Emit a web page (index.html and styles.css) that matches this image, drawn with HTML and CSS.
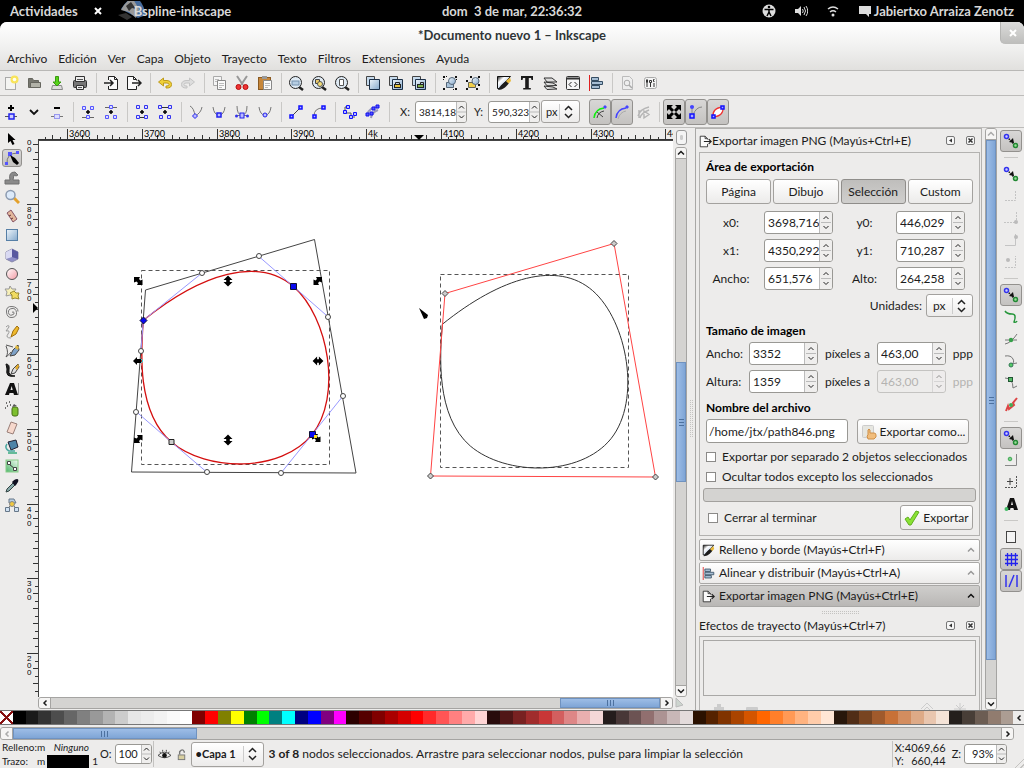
FILE: index.html
```html
<!DOCTYPE html>
<html lang="es">
<head>
<meta charset="utf-8">
<title>*Documento nuevo 1 - Inkscape</title>
<link rel="stylesheet" href="styles.css">
</head>
<body>
<svg class="defs" aria-hidden="true">
  <defs>
    <linearGradient id="blueg" x1="0" y1="0" x2="1" y2="1"><stop offset="0" stop-color="#eef5fb"/><stop offset="1" stop-color="#85a9cc"/></linearGradient>
    <linearGradient id="inkg" x1="0" y1="0" x2="1" y2="1"><stop offset="0" stop-color="#111"/><stop offset=".3" stop-color="#fff"/><stop offset="1" stop-color="#7ba0cf"/></linearGradient>
    <linearGradient id="pinkg" x1="0" y1="0" x2="1" y2="1"><stop offset="0" stop-color="#fff"/><stop offset="1" stop-color="#f49aa4"/></linearGradient>
    <linearGradient id="greeng" x1="0" y1="1" x2="1" y2="0"><stop offset="0" stop-color="#4fb56a"/><stop offset="1" stop-color="#eefaf0"/></linearGradient>
  </defs>
  <symbol id="new" viewBox="0 0 16 16"><rect x="2.500" y="2.500" width="10" height="12" fill="#f4f4f2" stroke="#aaa"/><circle cx="11.500" cy="4.500" r="4" fill="#f8e45c"/><circle cx="11.500" cy="4.500" r="1.800" fill="#fffef0"/></symbol>
  <symbol id="open" viewBox="0 0 16 16"><path d="M2.500 12.500v-9h4l1 2h5v7z" fill="#77776f" stroke="#66665f"/><path d="M4.500 12.500v-5h10v5z" fill="#b2b2a8" stroke="#66665f"/></symbol>
  <symbol id="save" viewBox="0 0 16 16"><path d="M3.500 10.500h9l1 4h-11z" fill="#ddd" stroke="#888"/><path d="M6.500 1.500h3V7H12l-4 4-4-4h2.500z" fill="#57d21a" stroke="#399a10"/></symbol>
  <symbol id="print" viewBox="0 0 16 16"><rect x="1.500" y="5.500" width="13" height="7" rx="1" fill="#777" stroke="#333"/><path d="M3.500 1.500h9v5h-9zM4.500 10.500h7v4h-7z" fill="#eee" stroke="#333"/><path d="M5 4.500h6M6 12.500h4" stroke="#555"/></symbol>
  <symbol id="import" viewBox="0 0 16 16"><path d="M5.500 5V1.500h6l3 3v10h-9V11" fill="#fafafa" stroke="#222"/><path d="M11.500 1.500v3h3" fill="none" stroke="#222"/><path d="M1 8h8M7 5l3 3-3 3" fill="none" stroke="#222" stroke-width="1.500"/></symbol>
  <symbol id="export" viewBox="0 0 16 16"><path d="M10.500 5.500v-1l-3-3h-6v13h9V11" fill="#fafafa" stroke="#222"/><path d="M7.500 1.500v3h3" fill="none" stroke="#222"/><path d="M6 8h8M12 5l3 3-3 3" fill="none" stroke="#222" stroke-width="1.500"/></symbol>
  <symbol id="undo" viewBox="0 0 16 16"><path d="M1.500 7l5-4v2.500h3.500q4.500.5 4.500 4T10 13H9v-2h1q2-.2 2-1.500T10 8H6.500v3z" fill="#f0d038" stroke="#bd9a1c"/></symbol>
  <symbol id="redo" viewBox="0 0 16 16"><path d="M14.500 7l-5-4v2.500H6Q1.500 6 1.500 9.500T6 13h1v-2H6q-2-.2-2-1.500T6 8h3.500v3z" fill="#ddd" stroke="#c4c4c4"/></symbol>
  <symbol id="copy" viewBox="0 0 16 16"><path d="M2.500 1.500h8v9h-8z" fill="#f5f5f5" stroke="#aaa"/><path d="M4 4.500h4M4 6.500h2" stroke="#bbb"/><path d="M6.500 5.500h8v9h-8z" fill="#fafafa" stroke="#888"/><path d="M8 8.500h5M8 10.500h5M8 12.500h3" stroke="#bbb"/></symbol>
  <symbol id="cut" viewBox="0 0 16 16"><path d="M3 1l6 9M13 1L7 10" stroke="#999" stroke-width="2"/><circle cx="4.500" cy="12" r="2.500" fill="#e33" stroke="#b80d0d"/><circle cx="11.500" cy="12" r="2.500" fill="#e33" stroke="#b80d0d"/></symbol>
  <symbol id="paste" viewBox="0 0 16 16"><rect x="1.500" y="2.500" width="12" height="12" fill="#c6863a" stroke="#8a5a22"/><rect x="5" y="1" width="5" height="3" fill="#999"/><path d="M6.500 5.500h8v9h-8z" fill="#fafafa" stroke="#888"/><path d="M8 8.500h5M8 10.500h5M8 12.500h3" stroke="#bbb"/></symbol>
  <symbol id="zoomsel" viewBox="0 0 16 16"><path d="M11 12l4 3" stroke="#222" stroke-width="2.500"/><circle cx="7.500" cy="7.500" r="6" fill="#dfeaf4" stroke="#222"/><rect x="4" y="6" width="7" height="4" fill="#b5cde3" stroke="#7692ae"/></symbol>
  <symbol id="zoomdraw" viewBox="0 0 16 16"><path d="M11 12l4 3" stroke="#222" stroke-width="2.500"/><circle cx="7.500" cy="7.500" r="6" fill="#dfeaf4" stroke="#222"/><path d="M4.500 4.500h4v4h-4z" fill="#e7c86a" stroke="#444"/><circle cx="9" cy="9" r="2.500" fill="#f3dd77" stroke="#555"/></symbol>
  <symbol id="zoompage" viewBox="0 0 16 16"><path d="M11 12l4 3" stroke="#222" stroke-width="2.500"/><circle cx="7.500" cy="7.500" r="6" fill="#dfeaf4" stroke="#222"/><path d="M5.500 4.500h4v6h-4z" fill="#fff" stroke="#555"/></symbol>
  <symbol id="dup" viewBox="0 0 16 16"><path d="M1.500 1.500h8v9h-8z" fill="#c6daec" stroke="#444"/><path d="M4.500 4.500h10v10h-10z" fill="url(#blueg)" stroke="#1b2f47"/></symbol>
  <symbol id="clone" viewBox="0 0 16 16"><path d="M1.500 1.500h8v9h-8z" fill="#c6daec" stroke="#444"/><path d="M4.500 4.500h10v10h-10z" fill="url(#blueg)" stroke="#1b2f47"/><rect x="6.500" y="9.500" width="6" height="3" fill="#e7c33a" stroke="#222"/><path d="M7.500 9V7.500h4V9" fill="none" stroke="#222"/></symbol>
  <symbol id="unclone" viewBox="0 0 16 16"><path d="M1.500 1.500h8v9h-8z" fill="#c6daec" stroke="#444"/><path d="M4.500 4.500h10v10h-10z" fill="url(#blueg)" stroke="#1b2f47"/><rect x="6.500" y="9.500" width="6" height="3" fill="#7fb34c" stroke="#222"/><path d="M9.500 9V7.500h3V9" fill="none" stroke="#222"/></symbol>
  <symbol id="group" viewBox="0 0 16 16"><path d="M4.500 7.500h7v5h-7z" fill="#a9c3da" stroke="#567"/><circle cx="10" cy="6" r="3.500" fill="url(#blueg)" stroke="#567"/><path d="M1 1h2v2H1zM13 1h2v2h-2zM1 13h2v2H1zM13 13h2v2h-2zM4 1h1v1H4zM1 4h1v1H1zM14 4h1v1h-1zM11 14h1v1h-1z" fill="#111"/></symbol>
  <symbol id="ungroup" viewBox="0 0 16 16"><path d="M3.500 7.500h7v5h-7z" fill="#f0cf4a" stroke="#665"/><circle cx="10.500" cy="6" r="3.500" fill="url(#blueg)" stroke="#567"/><path d="M1 5h2v2H1zM13 1h2v2h-2zM1 13h2v2H1zM11 13h2v2h-2zM5 1h2v2H5zM13 9h2v2h-2z" fill="#111"/></symbol>
  <symbol id="fill" viewBox="0 0 16 16"><path d="M1.500 1.500h13l-11 12h-2z" fill="url(#inkg)" stroke="#111"/><path d="M2 15c1-3 4-6 8-9l3 2c-3 4-6 7-11 7z" fill="#1c1c1c"/><path d="M10 6l4-3.500 1 3.500-2.500 2.500z" fill="#e7b93c"/></symbol>
  <symbol id="bigt" viewBox="0 0 16 16"><path d="M2 1h12v4h-1.500L12 3H9.800v10h2v1.500H4.200V13h2V3H4l-.5 2H2z" fill="#1b1b1b"/></symbol>
  <symbol id="layers" viewBox="0 0 16 16"><path d="M2 11l9 1 4 2-10 .5zM2 7l9 1 4 2.500-10 .3zM2 3h8l5 4H5z" fill="#ddd" stroke="#333"/></symbol>
  <symbol id="xml" viewBox="0 0 16 16"><rect x="1.500" y="1.500" width="13" height="13" rx="1" fill="#f5f5f5" stroke="#333"/><path d="M2 3.500h12" stroke="#333" stroke-width="2"/><path d="M6.500 7L4 9.500 6.500 12M9.500 7L12 9.500 9.500 12" fill="none" stroke="#222"/></symbol>
  <symbol id="align" viewBox="0 0 16 16"><path d="M1.500 0v16" stroke="#e02020"/><path d="M3.500 2.500h7v3h-7zM3.500 6.500h11v3h-11zM3.500 10.500h8v3h-8z" fill="#a6bed4" stroke="#354d63"/></symbol>
  <symbol id="docfind" viewBox="0 0 16 16"><path d="M3.500 1.500h7l3 3v10h-10z" fill="#eee" stroke="#bbb"/><circle cx="8" cy="8" r="2.800" fill="none" stroke="#aaa"/><path d="M10 10l3 3" stroke="#aaa" stroke-width="1.500"/></symbol>
  <symbol id="prefs" viewBox="0 0 16 16"><rect x="2.500" y="2.500" width="12" height="11" rx="2" fill="#f4f4f4" stroke="#aaa"/><path d="M4.500 4.500v3h1v-3M7.500 5.500h2v2h-2zM12.500 4.500h-1v2h1M5 8v4M8.500 8v4M12 8v4" fill="none" stroke="#333"/></symbol>

  <symbol id="nadd" viewBox="0 0 16 16"><path d="M2 12.500h12" stroke="#555"/><path d="M8 1v6M5 4h6" stroke="#000" stroke-width="2"/><rect x="6" y="10" width="5" height="5" fill="#ccf" stroke="#22e" stroke-width="1.500"/></symbol>
  <symbol id="ndel" viewBox="0 0 16 16"><path d="M2 12.500h12" stroke="#777"/><path d="M5 4h6" stroke="#000" stroke-width="2"/><rect x="5.500" y="10.500" width="5" height="4" fill="#ddf" stroke="#99e"/></symbol>
  <symbol id="chev" viewBox="0 0 16 16"><path d="M4 6l4 4 4-4" fill="none" stroke="#111" stroke-width="1.800"/></symbol>
  <symbol id="njoin" viewBox="0 0 16 16"><path d="M2.500 2.500h3v3h-3zM10.500 2.500h3v3h-3zM6.500 11.500h3v3h-3z" fill="#ddf" stroke="#55f"/><path d="M2 13.500h4M10 13.500h4" stroke="#666"/><path d="M8 6v4M6 8h4" stroke="#000" stroke-width="1.500"/></symbol>
  <symbol id="nbreak" viewBox="0 0 16 16"><path d="M6.500 1.500h3v3h-3zM2.500 11.500h3v3h-3zM10.500 11.500h3v3h-3z" fill="#ddf" stroke="#55f"/><path d="M2 3.500h4M10 3.500h4" stroke="#666"/><path d="M8 6v4M6 8h4" stroke="#000" stroke-width="1.500"/></symbol>
  <symbol id="sjoin" viewBox="0 0 16 16"><path d="M2.500 1.500h3v3h-3zM10.500 1.500h3v3h-3zM2.500 11.500h3v3h-3zM10.500 11.500h3v3h-3z" fill="#ddf" stroke="#33e"/><path d="M6 13.500h4" stroke="#333"/><path d="M8 6v4M6 8h4" stroke="#000" stroke-width="1.500"/></symbol>
  <symbol id="sdel" viewBox="0 0 16 16"><path d="M1.500 1.500h3v3h-3zM11.500 1.500h3v3h-3zM2.500 11.500h3v3h-3zM10.500 11.500h3v3h-3z" fill="#ddf" stroke="#33e"/><path d="M5 3.500h6" stroke="#333"/><path d="M8 6v4M6 8h4" stroke="#000" stroke-width="1.500"/></symbol>
  <symbol id="ncusp" viewBox="0 0 16 16"><path d="M2 2q4 2 5 10Q13 9 14 3" fill="none" stroke="#777"/><path d="M7 9.500l2.500 2.500L7 14.500 4.500 12z" fill="#bbf" stroke="#22e"/></symbol>
  <symbol id="nsmooth" viewBox="0 0 16 16"><path d="M2 3q1 8 6 8t6-8" fill="none" stroke="#777"/><rect x="6" y="9" width="4" height="4" fill="#bbf" stroke="#22e" stroke-width="1.500"/></symbol>
  <symbol id="nsym" viewBox="0 0 16 16"><path d="M3 2q0 9 5 9t5-9M2 11.500h12" fill="none" stroke="#777"/><rect x="6" y="9" width="4" height="5" fill="#bbf" stroke="#22e"/><circle cx="2.500" cy="12" r="1.500" fill="#33e"/><circle cx="13.500" cy="12" r="1.500" fill="#33e"/></symbol>
  <symbol id="nauto" viewBox="0 0 16 16"><path d="M2 3q1 8 6 8t6-8" fill="none" stroke="#777"/><circle cx="8" cy="11" r="2" fill="#bbf" stroke="#22e"/></symbol>
  <symbol id="sline" viewBox="0 0 16 16"><path d="M4 12l8-8" stroke="#444"/><path d="M2 11h3v3H2zM11 2h3v3h-3z" fill="#bbf" stroke="#11f" stroke-width="1.500"/></symbol>
  <symbol id="scurve" viewBox="0 0 16 16"><path d="M3 12q0-8 9-8" fill="none" stroke="#777"/><path d="M2 11h3v3H2zM11 2h3v3h-3z" fill="#bbf" stroke="#11f" stroke-width="1.500"/></symbol>
  <symbol id="topath" viewBox="0 0 16 16"><path d="M6 3H3v6h6v4h4" fill="none" stroke="#555"/><path d="M1.500 6.500h3v3h-3zM4.500 1.500h3v3h-3zM7.500 11.500h3v3h-3zM11.500 8.500h3v3h-3z" fill="#bbf" stroke="#11f"/></symbol>
  <symbol id="stpath" viewBox="0 0 16 16"><path d="M2 11q2-8 12-8M6 14q1-6 7-8" fill="none" stroke="#99b" stroke-width="2"/><path d="M1 9h3v3H1zM7 3h3v3H7zM5 8h3v3H5zM11 1h3v3h-3z" fill="#55f" stroke="#11e"/></symbol>
  <symbol id="clip" viewBox="0 0 16 16"><path d="M2 14Q3 5 12 4" fill="none" stroke="#1e1" stroke-width="1.500"/><path d="M13 1l2 2-2 2-2-2z" fill="#44f"/><path d="M5 14q1-6 7-7M5 8l6 5" stroke="#444" fill="none"/></symbol>
  <symbol id="mask" viewBox="0 0 16 16"><path d="M2 14Q3 5 12 4" fill="none" stroke="#44f" stroke-width="1.500"/><path d="M4 15q2-7 8-8" stroke="#aaa" fill="none"/><path d="M13 1l2 2-2 2-2-2z" fill="#44f"/></symbol>
  <symbol id="lpe" viewBox="0 0 16 16"><path d="M2 12q2-7 11-9M4 14q1-5 9-8M3 6v8M8 7v7l5-3.500z" fill="none" stroke="#b5b5b5" stroke-width="1.400"/></symbol>
  <symbol id="handles" viewBox="0 0 16 16"><path d="M1 1h6L1 7zM15 1v6L9 1zM1 15V9l6 6zM15 15H9l6-6z" fill="#000"/><path d="M3 3l4 4M13 3L9 7M3 13l4-4M13 13L9 9" stroke="#000" stroke-width="3"/></symbol>
  <symbol id="hshow" viewBox="0 0 16 16"><path d="M4 12V4M5 11q3-8 9-8" fill="none" stroke="#888"/><rect x="2" y="10" width="4" height="4" fill="#aaf" stroke="#11f" stroke-width="1.500"/><circle cx="4" cy="3" r="2" fill="#44f"/></symbol>
  <symbol id="outline" viewBox="0 0 16 16"><path d="M3 13Q2 4 13 3Q14 12 3 13z" fill="#fff" stroke="#e33" stroke-width="1.300"/><path d="M2 11h3v3H2zM11 2h3v3h-3z" fill="#aaf" stroke="#11f" stroke-width="1.500"/></symbol>

  <symbol id="tsel" viewBox="0 0 16 16"><path d="M4 2v10l2.500-2 2 4 2-1-2-4h3z" fill="#000"/></symbol>
  <symbol id="tnode" viewBox="0 0 16 16"><path d="M3 14Q2 3 14 3" fill="none" stroke="#777"/><path d="M4 2h4v4H4zM1 12h3v3H1zM12 1h3v3h-3z" fill="#55f"/><path d="M6 5l5 3 4 5-2 2-4-3z" fill="#000"/></symbol>
  <symbol id="ttweak" viewBox="0 0 16 16"><path d="M1 14v-4h5q-2-8 5-8l3 3-2 1-2-1-1 5h6v4z" fill="#8a8a8a" stroke="#707070"/></symbol>
  <symbol id="tzoom" viewBox="0 0 16 16"><path d="M10 9l5 5" stroke="#e4a12c" stroke-width="3"/><circle cx="6.500" cy="6" r="4.500" fill="#dceafa" stroke="#8c9bb0" stroke-width="1.500"/></symbol>
  <symbol id="tmeasure" viewBox="0 0 16 16"><path d="M7 2l6 9-4 3-6-9z" fill="#e2b79c" stroke="#856"/><path d="M5 8l2-1M7 11l2-1" stroke="#633"/></symbol>
  <symbol id="trect" viewBox="0 0 16 16"><rect x="2.500" y="2.500" width="11" height="11" fill="url(#blueg)" stroke="#567fa6"/></symbol>
  <symbol id="tbox" viewBox="0 0 16 16"><path d="M8 2l6 3v7l-6 3-6-3V5z" fill="#8f8fc8" stroke="#88a"/><path d="M8 2v8l-6 2V5z" fill="#d9d9f2"/><path d="M8 10l6 2V5L8 2z" fill="#5959a0"/></symbol>
  <symbol id="tcirc" viewBox="0 0 16 16"><circle cx="8" cy="8" r="5.500" fill="url(#pinkg)" stroke="#555"/></symbol>
  <symbol id="tstar" viewBox="0 0 16 16"><path d="M6 1l2 3 4 0-2 3 1 4-5-1-4 1 1-4-2-3 4 0z" fill="#f7f0b8" stroke="#999"/><path d="M10 6l2 2 3 0-1 3 1 3-4-1-3 1V10L6 8z" fill="#f1dc62" stroke="#998a30"/></symbol>
  <symbol id="tspiral" viewBox="0 0 16 16"><path d="M8 8.500q1-1.500 2 0t-2 2.500-3.500-2.500T8 4.500t4.500 4T8 13.500 2.500 8 8 2.500t6 5" fill="none" stroke="#777"/></symbol>
  <symbol id="tpencil" viewBox="0 0 16 16"><path d="M2 3q3-3 3 0L2 7q5-1 2 3t3 4" fill="none" stroke="#999"/><path d="M7 13l2-6 4-5 2 2-3 6z" fill="#efb92c" stroke="#a07010"/></symbol>
  <symbol id="tpen" viewBox="0 0 16 16"><path d="M2 2l7 2M2 3q3 7 0 11 3-2 5-5" fill="none" stroke="#555"/><path d="M6 13l3-6 5-5 1 5-4 5z" fill="#7ea2c8" stroke="#444"/><path d="M12 2l3 2-1 3-3-2z" fill="#e0b840"/></symbol>
  <symbol id="tcallig" viewBox="0 0 16 16"><path d="M2 2q4 0 3 6t6 6Q1 16 3 7z" fill="#222" stroke="#111"/><path d="M7 12l2-5 5-5 1 3-4 6z" fill="#ddd" stroke="#444"/><path d="M11 6l3-4 1 2-2 4z" fill="#e3aa28"/></symbol>
  <symbol id="ttext" viewBox="0 0 16 16"><path d="M1 14L6 2h4l4 12h-4l-.6-2H5.500L5 14zM6.500 9h2.200L7.700 5z" fill="#111"/><path d="M14.500 2v12" stroke="#999"/></symbol>
  <symbol id="tspray" viewBox="0 0 16 16"><path d="M2 2h1M5 1h1M3 5h1M6 4h1M1 7h1" stroke="#444" stroke-width="1.500"/><rect x="8" y="6" width="6" height="9" rx="2" fill="#7dbf2e" stroke="#476f16"/><path d="M8 6l2-3 3 2z" fill="#555"/></symbol>
  <symbol id="teraser" viewBox="0 0 16 16"><path d="M7 2l6 2-4 10-6-2z" fill="#f6d8cc" stroke="#9a7f78"/></symbol>
  <symbol id="tbucket" viewBox="0 0 16 16"><path d="M4 3l8-2 2 7-7 3z" fill="#4d84a8" stroke="#223"/><path d="M3 5q-3 4 2 7h6" fill="none" stroke="#4aa7a0" stroke-width="1.500"/><path d="M4 14h9" stroke="#6b9" stroke-width="2"/></symbol>
  <symbol id="tgrad" viewBox="0 0 16 16"><rect x="2" y="2" width="12" height="12" fill="url(#greeng)" stroke="#8c8"/><path d="M5 6l6 5" stroke="#333"/><path d="M3.500 3.500h3v3h-3zM9.500 9.500h3v3h-3z" fill="#fff" stroke="#444"/></symbol>
  <symbol id="tdrop" viewBox="0 0 16 16"><path d="M2 14l1-3 6-6 2 2-6 6z" fill="#8aa" stroke="#344"/><path d="M8 4l3 4 1-1 2-3q1-3-1-3t-4 2z" fill="#112"/></symbol>
  <symbol id="tconn" viewBox="0 0 16 16"><path d="M8 7l-4 4M8 7l4 4" stroke="#777"/><path d="M1.500 10.500h4v4h-4zM10.500 10.500h4v4h-4z" fill="#cfe0f2" stroke="#678"/><path d="M5 2h5l2 4H5z" fill="#b9d0e6" stroke="#678"/><circle cx="8" cy="7" r="2.500" fill="#f0c840" stroke="#888"/></symbol>

  <symbol id="snap" viewBox="0 0 16 16"><path d="M4 4l8 8" stroke="#111" stroke-width="1.500" stroke-dasharray="1.500 1"/><path d="M6 9l4-4 1 5z" fill="#111"/><circle cx="3.500" cy="3.500" r="2" fill="#ccf" stroke="#33e" stroke-width="1.500"/><circle cx="12.500" cy="12.500" r="2" fill="#9d9" stroke="#283" stroke-width="1.500"/></symbol>
  <symbol id="sn1" viewBox="0 0 16 16"><path d="M2 12.500h10.500V2" fill="none" stroke="#c4c4c4" stroke-dasharray="2 1"/></symbol>
  <symbol id="sn2" viewBox="0 0 16 16"><path d="M1 12.500h12.500V2" fill="none" stroke="#c4c4c4" stroke-dasharray="2 1"/><circle cx="13" cy="12" r="2" fill="#bbb"/></symbol>
  <symbol id="sn3" viewBox="0 0 16 16"><path d="M2 13.500h10.500V2" fill="none" stroke="#c4c4c4"/><circle cx="13" cy="5" r="2" fill="#bbb"/></symbol>
  <symbol id="sn4" viewBox="0 0 16 16"><path d="M2 13.500h10.500V2" fill="none" stroke="#c4c4c4" stroke-dasharray="2 1"/><circle cx="5" cy="6" r="2" fill="#bbb"/></symbol>
  <symbol id="sc1" viewBox="0 0 16 16"><path d="M2 2q2 3 7 3t2 8q2 1 3-1" fill="none" stroke="#25963a" stroke-width="1.500"/></symbol>
  <symbol id="sc2" viewBox="0 0 16 16"><path d="M2 13Q8 12 14 3M2 9h12" fill="none" stroke="#777"/><circle cx="8" cy="9" r="2.200" fill="#37a04a"/></symbol>
  <symbol id="sc3" viewBox="0 0 16 16"><path d="M2 3q6-1 8 3t-2 5l6-1" fill="none" stroke="#777"/><circle cx="8" cy="12" r="2" fill="#5c6" stroke="#375"/></symbol>
  <symbol id="sc4" viewBox="0 0 16 16"><path d="M2 3q8 0 8 10l4-2" fill="none" stroke="#777"/><rect x="5.500" y="2.500" width="4" height="4" fill="#5b6" stroke="#253"/></symbol>
  <symbol id="sc5" viewBox="0 0 16 16"><path d="M3 14l2-5 1 3 5-4-1-2 4-5" fill="none" stroke="#d44" stroke-width="2"/><circle cx="8" cy="8" r="2" fill="#4a5"/></symbol>
  <symbol id="so1" viewBox="0 0 16 16"><path d="M2 13.500h11.500V2" fill="none" stroke="#888"/><circle cx="7" cy="7" r="1.800" fill="#7c8" stroke="#4a5"/></symbol>
  <symbol id="so2" viewBox="0 0 16 16"><path d="M2 13.500h11.500V2" fill="none" stroke="#555" stroke-dasharray="2 1"/><path d="M4 7.500h6M7 4v7" stroke="#444"/></symbol>
  <symbol id="so3" viewBox="0 0 16 16"><path d="M3 14L7 2h4l4 12h-4l-.6-2H7.500L7 14zM8 9h2L9 5z" fill="#111"/><circle cx="3.500" cy="13" r="2" fill="#4b6"/></symbol>
  <symbol id="spage" viewBox="0 0 16 16"><rect x="3.500" y="2.500" width="9" height="11" fill="#f4f4f4" stroke="#444"/></symbol>
  <symbol id="sgrid" viewBox="0 0 16 16"><path d="M2 4.500h13M2 8.500h13M2 12.500h13M4.500 2v13M8.500 2v13M12.500 2v13" stroke="#22e" stroke-width="1.300"/></symbol>
  <symbol id="sguide" viewBox="0 0 16 16"><path d="M3 2v12M14 2v12M6 14l5-12" stroke="#33e" stroke-width="1.500"/></symbol>
  <symbol id="left" viewBox="0 0 8 8"><path d="M5.500 1.500L3 4l2.500 2.500" fill="none" stroke="currentColor" stroke-width="1.500"/></symbol>
  <symbol id="right" viewBox="0 0 8 8"><path d="M2.500 1.500L5 4 2.500 6.500" fill="none" stroke="currentColor" stroke-width="1.500"/></symbol>
  <symbol id="up" viewBox="0 0 8 8"><path d="M1 5.500L4 2.500l3 3" fill="none" stroke="currentColor" stroke-width="1.500"/></symbol>
  <symbol id="down" viewBox="0 0 8 8"><path d="M1 2.500l3 3 3-3" fill="none" stroke="currentColor" stroke-width="1.500"/></symbol>
  <symbol id="dockmin" viewBox="0 0 10 10"><rect x=".5" y=".5" width="8" height="8" rx="1.500" fill="#f6f6f6" stroke="#777"/><path d="M6 2.500v4L3 4.500z" fill="#333"/></symbol>
  <symbol id="dockx" viewBox="0 0 10 10"><rect x=".5" y=".5" width="8" height="8" rx="1.500" fill="#f6f6f6" stroke="#777"/><path d="M2.500 2.500l4 4M6.500 2.500l-4 4" stroke="#333" stroke-width="1.500"/></symbol>
</svg>

<header class="panel">
  <nav class="panel-left"><a href="#">Actividades</a>
    <svg class="ic8" viewBox="0 0 8 8"><path d="M1 1l6 6M7 1L1 7" stroke="#fff" stroke-width="2"/></svg>
    <a href="#" class="app"><svg viewBox="0 0 30 20"><path d="M3 8Q10-3 16-3q8 0 12 17l-8 3z" fill="#456b9c"/><path d="M3 9Q9-2 15-2l6 10-3 9-7-6z" fill="#999"/><path d="M8 5l5-4 5 7-4-1-3 3zM0 14l8-2 6 4-5 3z" fill="#333"/></svg><span>Bspline-inkscape</span></a></nav>
  <span class="clock">dom&nbsp; 3 de mar, 22:36:32</span>
  <div class="panel-right">
    <svg class="ic14" viewBox="0 0 14 14"><circle cx="7" cy="7" r="6.500" fill="#ddd"/><circle cx="7" cy="3" r="1.300" fill="#000"/><path d="M2.500 5.500h9M7 5v4M7 8l-2 4M7 8l2 4" stroke="#000" stroke-width="1.500" fill="none"/></svg>
    <svg class="ic14" viewBox="0 0 14 14"><path d="M1 5h3l3-3v10L4 9H1z" fill="#ddd"/><path d="M8.500 5q1.500 2 0 4M10 3q3 4 0 8M12 2q3.500 5 0 10" stroke="#ddd" fill="none"/></svg>
    <svg class="ic14" viewBox="0 0 14 14"><path d="M2 5q5-4 10 0M4 8q3-2.500 6 0" stroke="#ddd" stroke-width="1.500" fill="none"/><circle cx="7" cy="11" r="1.500" fill="#ddd"/></svg>
    <span class="user"><svg class="ic14" viewBox="0 0 14 14"><path d="M1 2h12v8h-2v3l-3-3H1z" fill="#ddd"/></svg>Jabiertxo Arraiza Zenotz</span>
  </div>
</header>

<div class="window">
  <div class="titlebar"><h1>*Documento nuevo 1 – Inkscape</h1><button class="close" aria-label="Cerrar"><svg class="ic8" viewBox="0 0 8 8"><path d="M1 1l6 6M7 1L1 7" stroke="#fff" stroke-width="2"/></svg></button></div>
  <nav class="menubar"><a href="#">Archivo</a><a href="#">Edición</a><a href="#">Ver</a><a href="#">Capa</a><a href="#">Objeto</a><a href="#">Trayecto</a><a href="#">Texto</a><a href="#">Filtros</a><a href="#">Extensiones</a><a href="#">Ayuda</a></nav>
  <div class="toolbar commands" data-icons="new open save print | import export | undo redo | copy cut paste | zoomsel zoomdraw zoompage | dup clone unclone | group ungroup | fill bigt layers xml align | docfind prefs"></div>
  <div class="toolbar controls">
    <div class="strip" data-icons="nadd chev ndel | njoin nbreak | sjoin sdel | ncusp nsmooth nsym nauto | sline scurve | topath stpath |"></div>
    <div class="coord"><label for="cx">X:</label><span class="spin small"><input id="cx" value="3814,18"></span></div>
    <div class="coord"><label for="cy">Y:</label><span class="spin small"><input id="cy" value="590,323"></span></div>
    <select class="unit" aria-label="Unidad"><option>px</option></select>
    <div class="strip toggles" data-icons="+clip +mask lpe | +handles +hshow +outline"></div>
  </div>

  <main class="work">
    <div class="toolbox" data-icons="tsel +tnode ttweak tzoom tmeasure trect tbox tcirc tstar tspiral tpencil tpen tcallig ttext tspray teraser tbucket tgrad tdrop tconn"></div>

    <section class="editor">
      <svg class="hruler" id="hruler"></svg>
      <button class="cms" aria-label="Ajuste de color"></button>
      <svg class="vruler" id="vruler"></svg>
      <svg class="canvas" id="canvas" role="img" aria-label="Lienzo">
        <defs>
          <path id="arr" d="M-6 0l5-5v3h2v-3l5 5-5 5v-3h-2v3z"/>
          <path id="arrd" d="M-6-6h7l-2 2 3 3 2-2v7h-1v1h-7l2-2-3-3-2 2v-7z"/>
          <path id="curve" d="M143.300 320.300C202 273 258.700 256.300 293.700 286.700C328.300 317 342.700 396.300 312 434.700C281 473 206.700 472 171.300 442C136.300 411.700 141 350.700 143.300 320.300z"/>
        </defs>
        <g transform="translate(-39 -141)" fill="none">
          <path d="M145.500 290L314.500 239.500 356 473 131.500 472z" stroke="#444"/>
          <rect x="141.500" y="270.500" width="188" height="194" stroke="#555" stroke-dasharray="4 3"/>
          <use href="#curve" stroke="#d40f0f" stroke-width="1.300"/>
          <path d="M143.300 320.300L202 273M258.700 256.300L293.700 286.700 328.300 317M342.700 396.300L312 434.700 281 473M206.700 472L171.300 442 136.300 411.700M141 350.700L143.300 320.300" stroke="#99f"/>
          <g fill="#fff" stroke="#444"><circle cx="202" cy="273" r="2.500"/><circle cx="259" cy="256" r="2.500"/><circle cx="328" cy="317" r="2.500"/><circle cx="343" cy="396" r="2.500"/><circle cx="281" cy="473" r="2.500"/><circle cx="207" cy="472" r="2.500"/><circle cx="136" cy="412" r="2.500"/><circle cx="141" cy="351" r="2.500"/></g>
          <g fill="#000">
            <path id="diag" d="M134 277h6l-1 2 1.500 1.500 2-1V285h-5.500l1-2-1.500-1.500-2.500 1z"/>
            <use href="#diag" transform="translate(456 0) scale(-1 1)"/>
            <use href="#diag" transform="translate(0 720) scale(1 -1)"/>
            <use href="#diag" transform="translate(178 157)"/>
            <use href="#arr" transform="translate(228 281) rotate(90) scale(.9)"/><use href="#arr" transform="translate(228 440) rotate(90) scale(.9)"/><use href="#arr" transform="translate(318 361) scale(.9)"/>
            <path d="M133 361l4-4v2h4v4h-4v2z"/>
          </g>
          <path d="M141 359l2 2-2 2" stroke="#3dd"/>
          <path d="M143.500 317l3.500 3.500-3.500 3.500-3.500-3.500zM290.500 283.500h6v6h-6zM309.500 431.500h6v6h-6z" fill="#0a0af0" stroke="#113"/>
          <path d="M314 435h3v3h-3z" fill="#fd2"/>
          <path d="M169 439.500h5v5h-5z" fill="#ccc" stroke="#222"/>
          <rect x="440.500" y="274.500" width="188" height="193" stroke="#555" stroke-dasharray="4 3"/>
          <use href="#curve" stroke="#333" transform="translate(299 4)"/>
          <path d="M445 293.500L614 243.500 655.500 477 430.500 476z" stroke="#f44"/>
          <path d="M445 290.500l3 3-3 3-3-3zM614 240.500l3 3-3 3-3-3zM655.500 474l3 3-3 3-3-3zM430.500 473l3 3-3 3-3-3z" fill="#ccc" stroke="#444"/>
          <path d="M419 308l9 7-1 3-3 1z" fill="#000"/>
        </g>
      </svg>
      <div class="scroll v" role="scrollbar" aria-controls="canvas" aria-valuenow="50"><button aria-label="Subir"><svg><use href="#up"/></svg></button><i class="s203"></i><b class="s117"></b><i class="s203"></i><button aria-label="Bajar"><svg><use href="#down"/></svg></button></div>
      <div class="scroll h" role="scrollbar" aria-controls="canvas" aria-valuenow="95"><button aria-label="Izquierda"><svg><use href="#left"/></svg></button><i class="s510"></i><b class="s98"></b><button aria-label="Derecha"><svg><use href="#right"/></svg></button></div>
      <svg class="managed" viewBox="0 0 12 12"><path d="M3 1l7 7-7 2z" fill="#cdd5cf" stroke="#bbb"/></svg>
    </section>

    <div class="splitter"><i></i></div>

    <aside class="dock" id="dock">
      <section class="dialog">
        <h2><svg class="ic13"><use href="#export"/></svg><span>Exportar imagen PNG (Mayús+Ctrl+E)</span><button aria-label="Iconizar"><svg><use href="#dockmin"/></svg></button><button aria-label="Cerrar panel"><svg><use href="#dockx"/></svg></button></h2>
        <form class="export">
          <h3>Área de exportación</h3>
          <div class="modes"><button type="button">Página</button><button type="button">Dibujo</button><button type="button" class="on">Selección</button><button type="button">Custom</button></div>
          <div class="area">
            <label for="x0">x0:</label><span class="spin"><input id="x0" value="3698,716"></span><label for="y0">y0:</label><span class="spin"><input id="y0" value="446,029"></span>
            <label for="x1">x1:</label><span class="spin"><input id="x1" value="4350,292"></span><label for="y1">y1:</label><span class="spin"><input id="y1" value="710,287"></span>
            <label for="aw">Ancho:</label><span class="spin"><input id="aw" value="651,576"></span><label for="ah">Alto:</label><span class="spin"><input id="ah" value="264,258"></span>
          </div>
          <div class="units"><label for="un">Unidades:</label><select id="un"><option>px</option></select></div>
          <h3>Tamaño de imagen</h3>
          <div class="size">
            <label for="iw">Ancho:</label><span class="spin"><input id="iw" value="3352"></span><label for="d1">píxeles a</label><span class="spin"><input id="d1" value="463,00"></span><span>ppp</span>
            <label for="ih">Altura:</label><span class="spin"><input id="ih" value="1359"></span><label for="d2">píxeles a</label><span class="spin off"><input id="d2" value="463,00" disabled></span><span class="off">ppp</span>
          </div>
          <h3>Nombre del archivo</h3>
          <div class="file"><input aria-label="Nombre del archivo" value="/home/jtx/path846.png"><button type="button"><svg class="ic16" viewBox="0 0 16 16"><rect x="1.500" y="1.500" width="11" height="12" rx="1" fill="#e6e6e0" stroke="#ccc"/><path d="M7 15q-2-4 0-4V6q1-2 2 0v3h4q2 0 2 2v2l-2 2z" fill="#f1bd7c" stroke="#cf9048"/></svg>Exportar como...</button></div>
          <label class="check"><input type="checkbox">Exportar por separado 2 objetos seleccionados</label>
          <label class="check"><input type="checkbox">Ocultar todos excepto los seleccionados</label>
          <div class="progress" role="progressbar" aria-label="Progreso"></div>
          <div class="finish"><label class="check"><input type="checkbox">Cerrar al terminar</label><button type="button"><svg class="ic16" viewBox="0 0 16 16"><path d="M1 9l3-2 2 3 6-9 3 1-8 13H5z" fill="#8ae234" stroke="#5fae20"/></svg>Exportar</button></div>
        </form>
        <button class="fold"><svg class="ic13"><use href="#fill"/></svg><span>Relleno y borde (Mayús+Ctrl+F)</span><svg class="ic8"><use href="#up"/></svg></button>
        <button class="fold"><svg class="ic13"><use href="#align"/></svg><span>Alinear y distribuir (Mayús+Ctrl+A)</span><svg class="ic8"><use href="#up"/></svg></button>
        <button class="fold on"><svg class="ic13"><use href="#export"/></svg><span>Exportar imagen PNG (Mayús+Ctrl+E)</span><svg class="ic8"><use href="#up"/></svg></button>
      </section>
      <div class="grip"></div>
      <section class="effects">
        <h2><span>Efectos de trayecto (Mayús+Ctrl+7)</span><button aria-label="Iconizar"><svg><use href="#dockmin"/></svg></button><button aria-label="Cerrar panel"><svg><use href="#dockx"/></svg></button></h2>
        <div class="fxframe"><div class="fxlist"></div>
          <div class="fxbtns"><svg viewBox="0 0 12 12"><path d="M4 1h4v3h3v4H1V4h3z" fill="#ccc"/></svg><svg viewBox="0 0 12 12"><rect y="4" width="12" height="4" rx="1" fill="#ccc"/></svg><i></i><svg viewBox="0 0 12 12"><path d="M0 6l6-6 6 6M2 8l4-4 4 4" fill="none" stroke="#ccc"/></svg><svg viewBox="0 0 12 12"><path d="M6 0v8M0 6h12M2 2l8 8M10 2l-8 8" stroke="#ccc"/></svg></div>
        </div>
      </section>
    </aside>
    <div class="scroll v docks" role="scrollbar" aria-controls="dock" aria-valuenow="0"><button class="dim" aria-label="Subir panel"><svg><use href="#up"/></svg></button><b class="s520"></b><i class="s40"></i><button aria-label="Bajar panel"><svg><use href="#down"/></svg></button></div>
    <div class="snapbar" data-icons="+snap | snap sn1 sn2 sn3 sn4 | +snap sc1 sc2 sc3 sc4 sc5 | +snap so1 so2 so3 | spage +sgrid +sguide"></div>
  </main>

  <div class="palette"><div class="swatches" id="swatches"></div><button aria-label="Menú de paleta"><svg class="ic8"><use href="#left"/></svg></button></div>
  <div class="scroll h pal" role="scrollbar" aria-controls="swatches" aria-valuenow="0"><button class="dim" aria-label="Paleta atrás"><svg><use href="#left"/></svg></button><b class="s181"></b><i class="s800"></i><button aria-label="Paleta adelante"><svg><use href="#right"/></svg></button></div>

  <footer class="status">
    <div class="style"><span>Relleno:</span><span>m</span><em>Ninguno</em><span></span><span>Trazo:</span><span>m</span><i></i><span>1</span></div>
    <label class="tiny" for="op">O:</label><span class="spin small op"><input id="op" value="100"></span>
    <span class="bar"></span>
    <button class="flat" aria-label="Visibilidad"><svg class="ic13" viewBox="0 0 14 14"><path d="M0 8q7-7 14 0-7 5-14 0z" fill="#eee" stroke="#444"/><circle cx="7" cy="8" r="2.500" fill="#111"/><path d="M2 4l1 2M5 2v2M9 2v2M12 4l-1 2" stroke="#444"/></svg></button>
    <button class="flat" aria-label="Bloqueo"><svg class="ic13" viewBox="0 0 14 14"><path d="M5 7V4q3-4 5 0v1" fill="none" stroke="#777" stroke-width="1.500"/><rect x="3.500" y="7.500" width="7" height="5" fill="#d8cfa0" stroke="#777"/></svg></button>
    <select class="layer" aria-label="Capa"><option>•Capa 1</option></select>
    <p><b>3 of 8</b> nodos seleccionados. Arrastre para seleccionar nodos, pulse para limpiar la selección</p>
    <div class="pos"><span>X:</span><span>4069,66</span><span>Y:</span><span>660,44</span></div>
    <label class="tiny" for="zm">Z:</label><span class="spin small zoom"><input id="zm" value="93%"></span>
    <span class="corner"></span>
  </footer>
</div>
<script src="script.js"></script>
</body>
</html>
```
FILE: styles.css
```css
* { box-sizing: border-box; }
html, body { height: 100%; }
body { margin: 0; background: #000; color: #1c1c1c; font: 12px/16px Lato, "Open Sans", sans-serif; display: flex; flex-direction: column; overflow: hidden; }
button, input, select { font: inherit; color: inherit; margin: 0; }
button { padding: 0; border: 0; background: none; }
a { color: inherit; text-decoration: none; }
h1, h2, h3, p { margin: 0; font-size: inherit; }
svg { display: block; flex: none; }
.defs { position: absolute; width: 0; height: 0; }
.ic8 { width: 8px; height: 8px; }
.ic13 { width: 13px; height: 13px; }
.ic14 { width: 14px; height: 14px; }
.ic16 { width: 16px; height: 16px; }

.panel { display: grid; grid-template-columns: 1fr auto 1fr; align-items: center; height: 22px; flex: none; color: #d8d8d8; font-size: 13px; font-weight: bold; padding: 0 10px; overflow: hidden; }
.panel-left, .panel-right { display: flex; align-items: center; }
.panel-left { gap: 16px; }
.app { display: flex; align-items: center; }
.app svg { width: 30px; height: 20px; margin-right: -14px; }
.app span { z-index: 1; }
.panel-right { justify-content: flex-end; gap: 18px; }
.user { display: flex; align-items: center; gap: 2px; }

.window { flex: 1; min-height: 0; display: flex; flex-direction: column; background: #edeceb; border-radius: 7px 7px 0 0; overflow: hidden; }
.titlebar { display: flex; align-items: center; height: 26px; flex: none; background: linear-gradient(#fff, #f0f0ef); color: #2e3436; font-size: 13px; }
.titlebar h1 { flex: 1; text-align: center; padding-left: 24px; }
.close { width: 24px; height: 22px; align-self: flex-start; display: grid; place-items: center; background: linear-gradient(#dcdcdb, #bdbdbb); border-left: 1px solid #b5b5b3; border-radius: 0 0 0 5px; }
.menubar { display: flex; gap: 11px; align-items: center; height: 23px; flex: none; padding: 0 7px; background: linear-gradient(#f0f0ef, #e1e0de); border-bottom: 1px solid #b9b8b6; }
.toolbar { display: flex; align-items: center; flex: none; border-bottom: 1px solid #bdbcba; }
.commands { height: 25px; }
.controls { height: 32px; }
.strip { display: flex; align-items: center; }
.ib { width: 22px; height: 22px; margin-right: 1px; flex: none; display: grid; place-items: center; border-radius: 3px; }
.ib svg { width: 16px; height: 16px; }
.ib.on { background: linear-gradient(#d8d7d6, #c4c2c0); border: 1px solid #93918e; }
.sep { width: 8px; height: 20px; flex: none; background: linear-gradient(#c9c8c6, #c9c8c6) center / 1px 100% no-repeat; }
.coord { display: flex; align-items: center; gap: 5px; margin-left: 7px; font-size: 11px; }
.controls .spin { width: 52px; font-size: 10px; }
.toggles { margin-left: 9px; }
.toggles .ib { height: 26px; margin: 0; }

.spin { display: flex; width: 69px; height: 23px; border: 1px solid #999894; border-radius: 3px; background: #fff; overflow: hidden; }
.spin input { flex: 1; min-width: 0; border: 0; background: none; padding: 0 0 0 3px; outline: 0; }
.spin::after { content: ""; flex: none; width: 12px; border-left: 1px solid #bbb; background: url("data:image/svg+xml,%3Csvg xmlns='http://www.w3.org/2000/svg' width='10' height='21'%3E%3Cpath d='M0 10.500h10' stroke='%23bbb'/%3E%3Cpath d='M2.500 7L5 4.500 7.500 7M2.500 14L5 16.500 7.500 14' fill='none' stroke='%23222'/%3E%3C/svg%3E") center no-repeat #efeeed; }
.spin.small { font-size: 11px; height: 22px; }
.controls .spin.small { font-size: 10px; }
.spin.small::after { width: 9px; }
.off { color: #b4b3b1; }
.spin.off { background: #edeceb; border-color: #c4c3c1; }
.spin.off::after { opacity: .45; }
select { appearance: none; border: 1px solid #a3a19e; border-radius: 3px; padding: 0 20px 0 6px; background: url("data:image/svg+xml,%3Csvg xmlns='http://www.w3.org/2000/svg' width='20' height='16'%3E%3Cpath d='M.5 0v16' stroke='%23ccc'/%3E%3Cpath d='M6 6l3.500-3.500L13 6M6 10l3.500 3.500L13 10' fill='none' stroke='%23222' stroke-width='1.500'/%3E%3C/svg%3E") right center no-repeat, linear-gradient(#fff, #ecebea); }
.unit { width: 39px; height: 23px; margin-left: 1px; padding-left: 4px; padding-right: 18px; font-size: 11px; }

.work { flex: 1; min-height: 0; display: flex; }
.toolbox { width: 27px; flex: none; display: grid; grid-auto-rows: 1fr; justify-items: center; height: 385px; margin-top: 2px; padding-right: 3px; }
.toolbox .ib { width: 20px; height: 18px; margin: 0; }
.editor { flex: 1; min-width: 0; display: grid; grid-template: 12px 1fr 12px / 11px 1fr 13px; padding-bottom: 1px; }
.hruler { grid-column: 1 / 3; width: 100%; height: 12px; font-size: 9px; }
.vruler { grid-row: 2; grid-column: 1; width: 11px; height: 100%; font: 8px "Liberation Sans", sans-serif; }
.canvas { grid-row: 2; grid-column: 2; width: 100%; height: 100%; background: #fff; border-left: 1px solid #444; border-top: 1px solid #444; }
.cms { grid-row: 1; grid-column: 3; width: 11px; height: 15px; margin: 2px 0 0 3px; border: 1px solid #999; border-radius: 3px; background: radial-gradient(#ccc 25%, #f4f4f4 30%); z-index: 1; }
.editor .scroll.v { grid-row: 2; grid-column: 3; margin: 7px 0 0 2px; }
.editor .scroll.h { grid-row: 3; grid-column: 1 / 3; margin-left: 11px; height: 12px; }
.managed { grid-row: 3; grid-column: 3; width: 12px; height: 12px; }

.scroll { display: flex; background: #d4d3d1; border: 1px solid #a5a4a2; border-radius: 3px; overflow: hidden; }
.scroll.v { flex-direction: column; width: 12px; }
.scroll.h { height: 13px; }
.scroll button { width: 12px; flex: none; display: grid; place-items: center; background: #f6f5f4; }
.scroll.v button { width: auto; height: 11px; }
.scroll button svg { width: 8px; height: 8px; }
.scroll.v button:first-child { border-bottom: 1px solid #a5a4a2; }
.scroll.v button:last-child { border-top: 1px solid #a5a4a2; }
.scroll.h button:first-child { border-right: 1px solid #a5a4a2; }
.scroll.h button:last-child { border-left: 1px solid #a5a4a2; }
.scroll .dim { color: #aaa; }
.scroll b { border: 1px solid #6f92c0; display: grid; place-items: center; }
.scroll.h b { background: linear-gradient(#9dbde6, #7fa5d6); }
.scroll.v b { background: linear-gradient(90deg, #9dbde6, #7fa5d6); }
.scroll b::after { content: ""; width: 7px; height: 6px; background: repeating-linear-gradient(90deg, #4d719f 0 1px, transparent 1px 3px); }
.scroll.v b::after { width: 5px; height: 7px; background: repeating-linear-gradient(#4d719f 0 1px, transparent 1px 3px); }
.s203 { flex: 203; } .s117 { flex: 117; } .s510 { flex: 510; } .s98 { flex: 98; } .s520 { flex: 521; } .s40 { flex: 38; } .s181 { flex: 181; } .s800 { flex: 800; }

.splitter { width: 10px; flex: none; border-right: 1px solid #a9a8a6; display: flex; align-items: center; justify-content: center; }
.splitter i { width: 4px; height: 38px; background: conic-gradient(#c4c3c1 25%, transparent 0) 0 0 / 2px 2px; }
.dock { width: 286px; flex: none; display: flex; flex-direction: column; overflow: hidden; border: 1px solid #b3b2b0; border-width: 1px 1px 0 0; padding: 1px 1px 0 3px; }
.dock h2 { display: flex; align-items: center; height: 22px; font-weight: normal; padding-right: 4px; }
.dock h2 span { flex: 1; white-space: nowrap; }
.dock h2 button { margin-left: 10px; }
.dock h2 svg:not(.ic13) { width: 10px; height: 10px; }
.export { border: 1px solid #b3b2b0; padding: 5px 6px; margin-bottom: 3px; }
h3 { height: 17px; line-height: 17px; color: #000; }
.modes { display: grid; grid-template-columns: repeat(4, 1fr); gap: 2px; margin: 4px 0 7px; }
.modes button, .file button, .finish button { height: 25px; border: 1px solid #a3a19e; border-radius: 3px; background: linear-gradient(#fff, #ecebea); white-space: nowrap; }
.modes .on { background: linear-gradient(#bfbebc, #d0cfcd); border-color: #8f8d8a; }
.area { display: grid; grid-template-columns: 50px 69px 1fr 69px; gap: 5px 8px; align-items: center; padding-right: 8px; text-align: center; }
.units { display: flex; justify-content: flex-end; align-items: center; gap: 4px; margin: 4px 0 5px; }
.units select { width: 47px; height: 23px; }
.size { display: grid; grid-template-columns: 43px 69px 59px 69px 1fr; gap: 5px 0; align-items: center; margin: 3px 0 6px; white-space: nowrap; text-align: center; }
.size label:first-child, .size label:nth-child(6) { text-align: left; }
.size > span:not(.spin) { text-align: right; }
.file { display: flex; justify-content: space-between; margin: 3px 4px 3px 0; }
.file input { width: 142px; height: 24px; border: 1px solid #999894; border-radius: 3px; padding: 0 2px; background: #fff; }
.file button { width: 112px; }
.file button, .finish button { display: flex; align-items: center; justify-content: center; gap: 3px; }
.check { display: flex; align-items: center; gap: 6px; height: 20px; white-space: nowrap; }
.check input { appearance: none; width: 10px; height: 10px; flex: none; background: #fff; border: 1px solid #8b8a88; }
.progress { height: 14px; margin: 1px -3px 3px; border: 1px solid #a3a19e; border-radius: 3px; background: #d4d3d1; }
.finish { display: flex; justify-content: space-between; align-items: center; padding-left: 2px; }
.finish button { width: 73px; }
.fold { width: 100%; display: flex; align-items: center; gap: 4px; height: 22px; margin-bottom: 1px; padding: 0 4px 0 2px; border: 1px solid #a9a8a6; border-radius: 2px; background: linear-gradient(#fff, #ecebea); text-align: left; }
.fold span { flex: 1; }
.fold .ic8 { color: #999; }
.fold.on { background: linear-gradient(#cfcecc, #b9b7b5); }
.fold.on .ic8 { color: #111; }
.grip { height: 4px; margin: 3px auto 0; width: 38px; flex: none; background: conic-gradient(#c4c3c1 25%, transparent 0) 0 0 / 2px 2px; }
.effects h2 { height: 21px; }
.fxframe { border: 1px solid #b3b2b0; padding: 3px 3px 0; }
.fxlist { height: 56px; border: 1px solid #a9a8a6; }
.fxbtns { display: flex; gap: 21px; padding: 7px 10px; }
.fxbtns svg { width: 12px; height: 12px; }
.fxbtns i { flex: 1; }
.docks { margin-left: 3px; flex: none; }
.snapbar { width: 27px; flex: none; display: flex; flex-direction: column; align-items: center; padding: 2px 0 0 1px; }
.snapbar .ib { margin: 0; }
.snapbar .sep { width: 14px; height: 11px; background-size: 100% 1px; }

.palette { display: flex; flex: none; height: 15px; border-top: 1px solid #777; border-bottom: 1px solid #777; }
.swatches { flex: 1; display: flex; }
.swatches button { flex: 1; }
.swatches .none { background: linear-gradient(45deg, transparent 46%, #811 46% 54%, transparent 54%), linear-gradient(-45deg, #fff 46%, #811 46% 54%, #fff 54%); }
.palette > button { width: 11px; display: grid; place-items: center; }
.pal { margin: 2px 10px 0 0; flex: none; }

.status { height: 28px; flex: none; display: flex; align-items: center; padding-left: 2px; }
.style { display: grid; grid-template-columns: 35px 10px 42px 9px; font-size: 10px; line-height: 14px; align-items: center; white-space: nowrap; flex: none; }
.style em { text-align: right; }
.style span:last-child { text-align: right; }
.style i { background: #000; height: 13px; }
.tiny { font-size: 11px; margin: 0 3px 0 2px; }
.status .spin { height: 20px; flex: none; }
.op { width: 37px; }
.zoom { width: 43px; }
.zoom input { padding-left: 7px; }
.bar { height: 26px; border-left: 1px solid #c4c3c1; margin: 0 2px 0 1px; flex: none; }
.flat { width: 17px; display: grid; place-items: center; }
.layer { width: 73px; height: 25px; font-size: 11px; font-weight: bold; padding-left: 4px; margin: 0 5px 0 1px; flex: none; }
.status p { flex: 1; min-width: 0; white-space: nowrap; overflow: hidden; }
.pos { display: grid; grid-template-columns: 10px 41px; font-size: 11px; line-height: 13px; border-left: 1px solid #c4c3c1; padding-left: 2px; flex: none; margin-right: 4px; }
.pos span:nth-child(even) { text-align: right; }
.corner { width: 17px; height: 14px; flex: none; align-self: flex-end; background: repeating-linear-gradient(135deg, transparent 0 3px, #c4c3c1 3px 4px); clip-path: polygon(100% 0, 100% 100%, 30% 100%); }
```
FILE: script.js
```js
const NS = "http://www.w3.org/2000/svg";

// Icon strips: "|" is a separator, a leading "+" is a pressed toggle.
document.querySelectorAll("[data-icons]").forEach(strip => {
  strip.dataset.icons.split(" ").forEach(name => {
    if (name === "|") {
      const sep = document.createElement("span");
      sep.className = "sep";
      strip.append(sep);
      return;
    }
    const on = name[0] === "+";
    const id = on ? name.slice(1) : name;
    const button = document.createElement("button");
    button.className = on ? "ib on" : "ib";
    button.setAttribute("aria-label", id);
    button.innerHTML = `<svg><use href="#${id}"/></svg>`;
    strip.append(button);
  });
});

const greys = "000 1a1a1a 333 4d4d4d 666 808080 999 b3b3b3 ccc e6e6e6 ececec f2f2f2 f9f9f9 fff";
const base = "800000 f00 808000 ff0 008000 0f0 008080 0ff 000080 00f 800080 f0f";
const reds = "2b0000 550000 800000 aa0000 d40000 ff0000 ff2a2a ff5555 ff8080 ffaaaa ffd5d5 280b0b 501616 782121 a02c2c c83737 d35f5f de8787 e9afaf f4d7d7 241c1c 483737 6c5353 916f6f ac9393 c8b7b7 e3dbdb";
const oranges = "2b1100 552200 803300 aa4400 d45500 ff6600 ff7f2a ff9955 ffb380 ffccaa ffe6d5 28170b 502d16 784421 a05a2c c87137 d38d5f deaa87 e9c6af f4e3d7 241f1c 483e37 6c5d53 917c6f ac9d93";
const swatches = document.getElementById("swatches");
swatches.innerHTML = '<button class="none" aria-label="Ninguno"></button>';
[greys, base, reds, oranges].join(" ").split(" ").forEach(c => {
  const b = document.createElement("button");
  b.style.background = "#" + c;
  b.setAttribute("aria-label", "#" + c);
  swatches.append(b);
});

// Rulers: 100 px of the document span 74.8 px on screen.
const step = 74.8;
function add(svg, tag, attrs, text) {
  const el = document.createElementNS(NS, tag);
  Object.entries(attrs).forEach(([k, v]) => el.setAttribute(k, v));
  if (text) el.textContent = text;
  svg.append(el);
}
const h = document.getElementById("hruler");
let d = "M11 11.5H2000";
for (let i = -10; i < 300; i++) {
  const x = Math.round(40 + i * step / 10) + .5;
  if (x < 11) continue;
  d += `M${x} 12V${i % 10 === 0 ? 1 : i % 2 === 0 ? 7 : 9}`;
}
add(h, "path", { d, stroke: "#333", fill: "none" });
["3600", "3700", "3800", "3900", "4k", "4100", "4200", "4300", "4400"].forEach((t, i) =>
  add(h, "text", { x: Math.round(42 + i * step), y: 9 }, t));
add(h, "path", { d: "M387 7h10l-5 5z", fill: "#000" });

const v = document.getElementById("vruler");
d = "";
for (let i = -1; i < 200; i++) {
  const y = Math.round(-10.5 + i * step / 10) + .5;
  d += `M11 ${y}H${i % 10 === 0 ? 0 : i % 2 === 0 ? 6 : 8}`;
}
add(v, "path", { d, stroke: "#333", fill: "none" });
["900", "800", "700", "600", "500", "400", "300", "200"].forEach((t, i) =>
  [...t].forEach((c, j) => add(v, "text", { x: 0, y: Math.round(-2.5 + i * step + j * 7) }, c)));
add(v, "path", { d: "M6 163v10l5-5z", fill: "#000" });
```
